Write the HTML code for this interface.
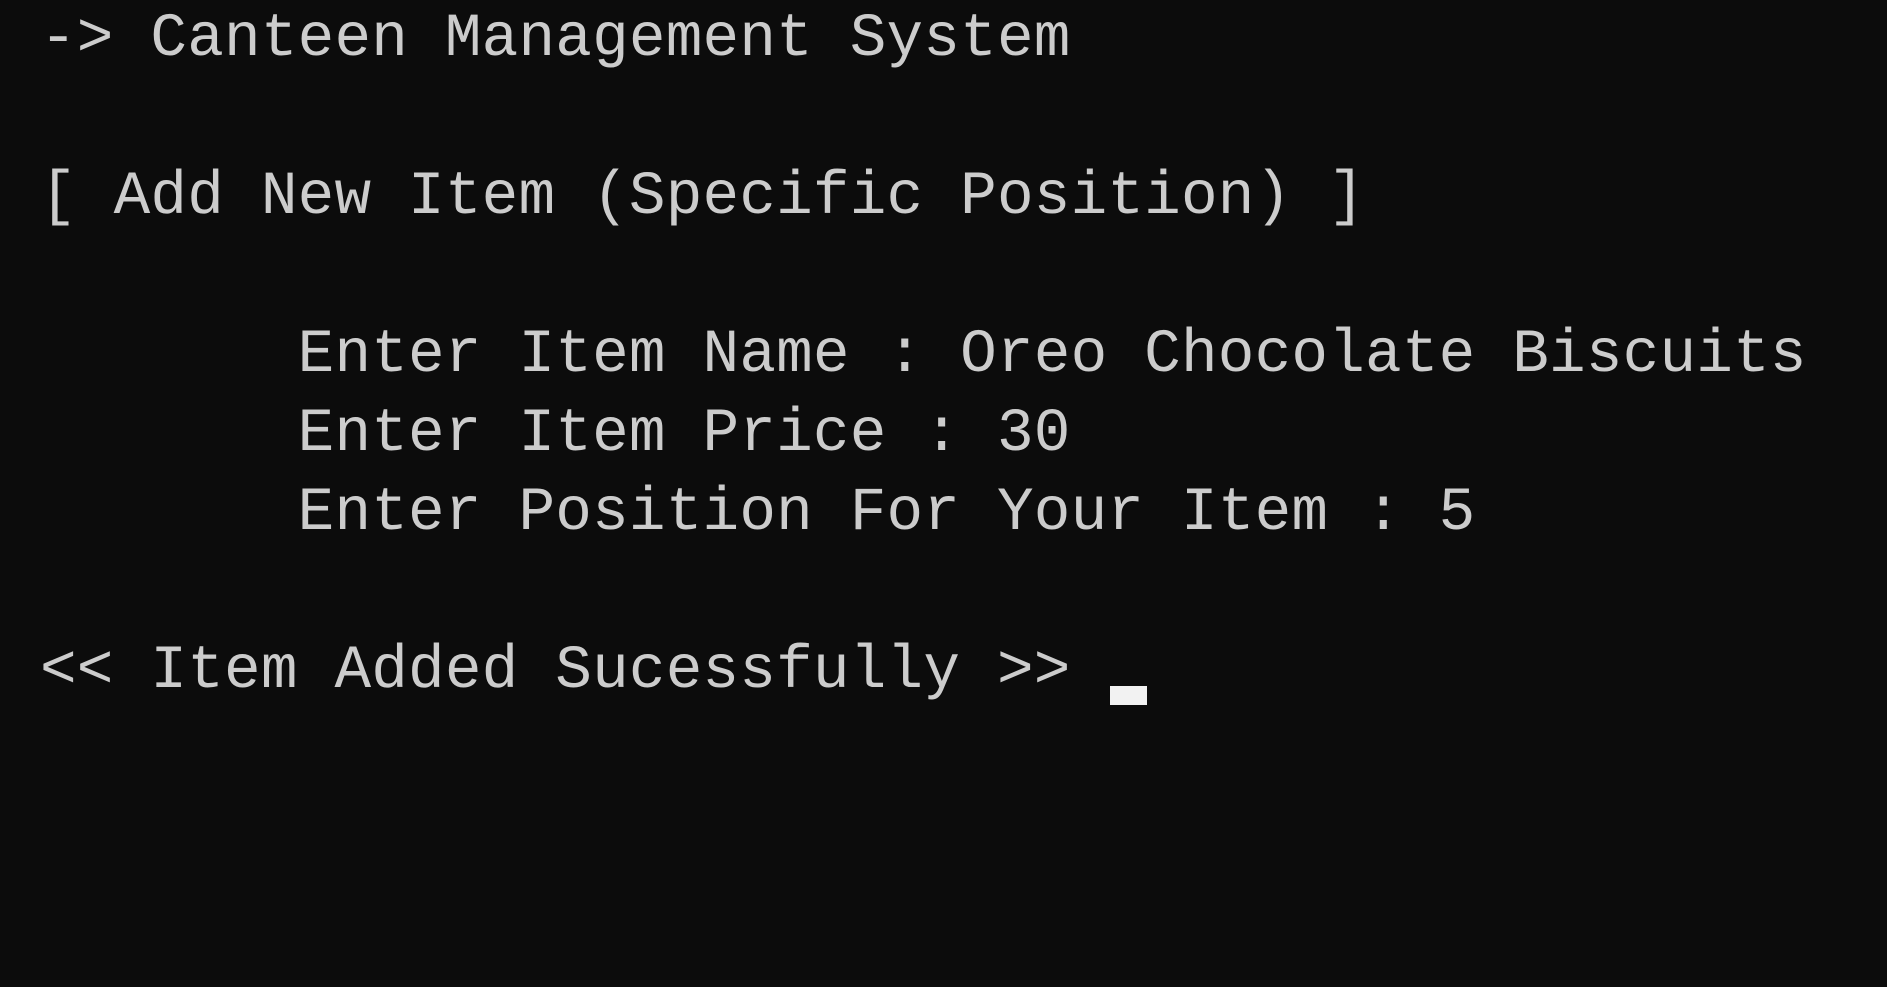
<!DOCTYPE html>
<html><head><meta charset="utf-8"><style>
html,body{margin:0;padding:0;background:#0c0c0c;width:1887px;height:987px;overflow:hidden}
.t{position:absolute;left:40px;top:0px;font-family:"Liberation Mono",monospace;font-size:61px;line-height:79px;color:#cccccc;white-space:pre;letter-spacing:0.2px}
.c{position:absolute;left:1110px;top:686px;width:37px;height:19px;background:#f2f2f2}
</style></head><body>
<div class="t">-&gt; Canteen Management System

[ Add New Item (Specific Position) ]

       Enter Item Name : Oreo Chocolate Biscuits
       Enter Item Price : 30
       Enter Position For Your Item : 5

&lt;&lt; Item Added Sucessfully &gt;&gt; </div>
<div class="c"></div>
</body></html>
